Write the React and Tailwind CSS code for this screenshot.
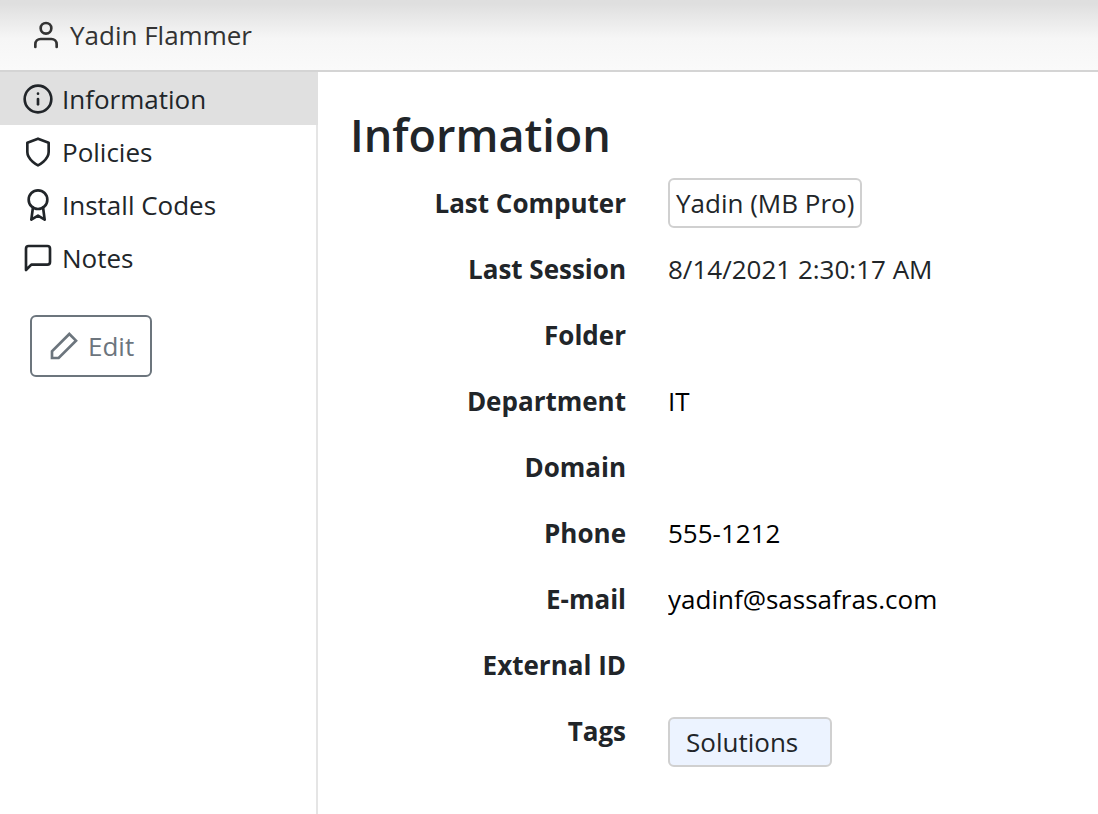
import { useState } from 'react';

const ICONS = {
  user: (
    <>
      <path d="M20 21v-2a4 4 0 0 0-4-4H8a4 4 0 0 0-4 4v2" />
      <circle cx="12" cy="7" r="4" />
    </>
  ),
  info: (
    <>
      <circle cx="12" cy="12" r="10" />
      <line x1="12" y1="16" x2="12" y2="12" />
      <line x1="12" y1="8" x2="12" y2="8" />
    </>
  ),
  shield: <path d="M12 22s8-4 8-10V5l-8-3-8 3v7c0 6 8 10 8 10z" />,
  award: (
    <>
      <circle cx="12" cy="8" r="7" />
      <polyline points="8.21 13.89 7 23 12 20 17 23 15.79 13.88" />
    </>
  ),
  message: <path d="M21 15a2 2 0 0 1-2 2H7l-4 4V5a2 2 0 0 1 2-2h14a2 2 0 0 1 2 2z" />,
  edit: <polygon points="16 3 21 8 8 21 3 21 3 16 16 3" strokeLinejoin="miter" />,
};

const SECTIONS = [
  { id: 'information', label: 'Information', icon: 'info' },
  { id: 'policies', label: 'Policies', icon: 'shield' },
  { id: 'codes', label: 'Install Codes', icon: 'award' },
  { id: 'notes', label: 'Notes', icon: 'message' },
];

const FIELDS = [
  { id: 'folder', label: 'Folder', value: '' },
  { id: 'department', label: 'Department', value: 'IT' },
  { id: 'domain', label: 'Domain', value: '' },
  { id: 'phone', label: 'Phone', value: '555-1212' },
  { id: 'email', label: 'E-mail', value: 'yadinf@sassafras.com' },
  { id: 'externalId', label: 'External ID', value: '' },
];

function Icon({ name }) {
  return (
    <svg
      viewBox="0 0 24 24"
      className="size-8 shrink-0"
      fill="none"
      stroke="currentColor"
      strokeWidth="2"
      strokeLinecap="round"
      strokeLinejoin="round"
      aria-hidden="true"
    >
      {ICONS[name]}
    </svg>
  );
}

function Row({ label, htmlFor, children }) {
  return (
    <div className="grid min-h-[66px] grid-cols-[276px_1fr] items-center gap-x-[42px]">
      {htmlFor ? (
        <label htmlFor={htmlFor} className="text-right font-bold">{label}</label>
      ) : (
        <span className="text-right font-bold">{label}</span>
      )}
      <div className="flex min-w-0">{children}</div>
    </div>
  );
}

export default function App() {
  const [active, setActive] = useState('information');

  return (
    <div className="flex min-h-screen flex-col bg-white font-['Open_Sans',sans-serif] text-[26px] leading-9 text-[#212529]">
      <header className="flex h-[72px] items-center gap-2 border-b-2 border-[#d4d4d4] bg-linear-to-b from-[#dfdfdf] from-5% via-[#f6f6f6] via-55% to-[#fafafa] px-[30px] text-[#333]">
        <Icon name="user" />
        <span>Yadin Flammer</span>
      </header>

      <div className="flex grow">
        <aside className="w-[318px] shrink-0 bg-linear-to-l from-[#e5e5e5] from-[2px] to-white to-[2px]">
          <nav>
            {SECTIONS.map((section) => (
              <a
                key={section.id}
                href={`#${section.id}`}
                onClick={() => setActive(section.id)}
                className={`flex h-[53px] items-center gap-2 px-[22px] ${active === section.id ? 'bg-[#e0e0e0]' : ''}`}
              >
                <Icon name={section.icon} />
                {section.label}
              </a>
            ))}
          </nav>
          <button
            type="button"
            className="mt-[31px] ml-[30px] flex h-[62px] items-center gap-2 rounded-md border-2 border-[#6c757d] px-4 text-[#6c757d]"
          >
            <Icon name="edit" />
            Edit
          </button>
        </aside>

        <main className="grow px-8 pt-[34px]">
          <h1 className="mb-1.5 text-[45px] leading-[58px] font-semibold">Information</h1>

          <Row label="Last Computer">
            <a href="#computer" className="rounded-md border-2 border-[#d0d0d0] px-1.5 py-[5px]">
              Yadin (MB Pro)
            </a>
          </Row>
          <Row label="Last Session">
            <span>8/14/2021 2:30:17 AM</span>
          </Row>
          {FIELDS.map((field) => (
            <Row key={field.id} label={field.label} htmlFor={field.id}>
              <input
                id={field.id}
                type="text"
                readOnly
                defaultValue={field.value}
                className="w-full bg-transparent text-black outline-none"
              />
            </Row>
          ))}
          <div className="grid grid-cols-[276px_1fr] items-start gap-x-[42px] pt-[15px]">
            <span className="text-right font-bold">Tags</span>
            <ul className="flex pt-1">
              <li className="rounded-md border-2 border-[#d0d0d0] bg-[#ecf3ff] py-[5px] pr-8 pl-4">Solutions</li>
            </ul>
          </div>
        </main>
      </div>
    </div>
  );
}
